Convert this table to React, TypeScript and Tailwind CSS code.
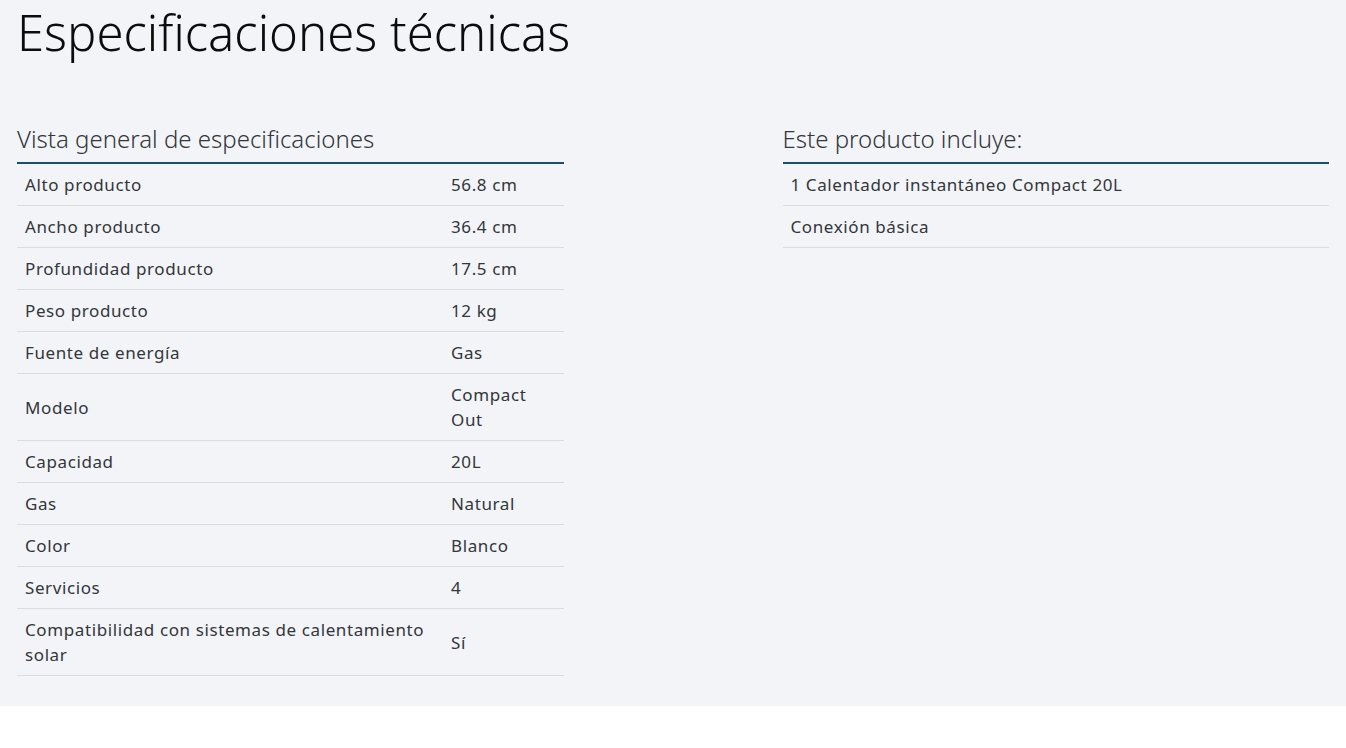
const specs: [string, string][] = [
  ['Alto producto', '56.8 cm'],
  ['Ancho producto', '36.4 cm'],
  ['Profundidad producto', '17.5 cm'],
  ['Peso producto', '12 kg'],
  ['Fuente de energía', 'Gas'],
  ['Modelo', 'Compact Out'],
  ['Capacidad', '20L'],
  ['Gas', 'Natural'],
  ['Color', 'Blanco'],
  ['Servicios', '4'],
  ['Compatibilidad con sistemas de calentamiento solar', 'Sí'],
]

const includes = ['1 Calentador instantáneo Compact 20L', 'Conexión básica']

const App = () => {
  return (
    <div className="bg-white min-h-[748px]" style={{ fontFamily: '"Noto Sans", sans-serif' }}>
      <section className="bg-[#f2f4f7] px-[17px] pb-[30px] text-[#33363a]">
        <h1 className="text-[49px] leading-[64px] font-light text-[#0b0c0d]">Especificaciones técnicas</h1>

        <div className="flex gap-[219px] mt-[57px]">
          {/* Spec table */}
          <div className="w-[547px]">
            <h2 className="text-[24px] font-light leading-[36px] pb-[5px] border-b-2 border-[#1b4e6b]">
              Vista general de especificaciones
            </h2>
            <table className="w-full text-[17px] leading-[25px] tracking-[0.6px]">
              <tbody>
                {specs.map(([label, value]) => (
                  <tr key={label} className="border-b border-[#d9dbde]">
                    <td className="py-2 pl-2 pr-2 w-[426px] align-middle">{label}</td>
                    <td className="py-2 px-2 align-middle">{value}</td>
                  </tr>
                ))}
              </tbody>
            </table>
          </div>

          {/* Included items */}
          <div className="w-[547px]">
            <h2 className="text-[24px] font-light leading-[36px] pb-[5px] border-b-2 border-[#1b4e6b]">
              Este producto incluye:
            </h2>
            <ul className="text-[17px] leading-[25px] tracking-[0.6px]">
              {includes.map((item) => (
                <li key={item} className="py-2 px-2 border-b border-[#d9dbde]">{item}</li>
              ))}
            </ul>
          </div>
        </div>
      </section>
    </div>
  )
}

export default App
